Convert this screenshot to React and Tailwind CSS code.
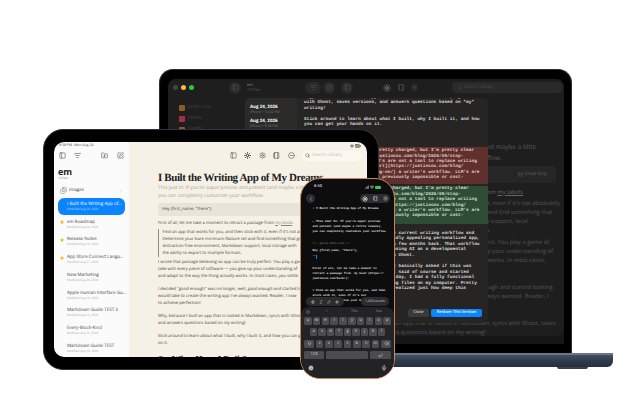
import { PanelLeft, ListFilter, FolderPlus, SquarePen, Settings, CircleMinus, Search, ChevronRight, ChevronLeft, Images, Star, Wifi, BatteryFull, Signal, Mail, Mic, Smile, Bold, Italic, Link, Hash, Delete, ArrowBigUp, CornerDownLeft, Sun, Notebook } from 'lucide-react'

const files = [
  ['em Roadmap', 'Modified Aug 24, 2026', true],
  ['Release Notes', 'Modified Aug 14, 2026', true],
  ['App Store Connect Langu...', 'Modified Aug 21, 2026', true],
  ['New Marketing', 'Modified Aug 20, 2026', false],
  ['Apple Human Interface Gu...', 'Modified Aug 19, 2026', false],
  ['Markdown Guide TEST 3', 'Modified Aug 18, 2026', false],
  ['Every-Block-Kind', 'Modified Aug 18, 2026', false],
  ['Markdown Guide TEST', 'Modified Aug 18, 2026', false],
]

// [text, line length in characters] - the start of each line sits behind the other devices
const oldLines = [
  ["pretty charged, but I'm pretty clear", 63],
  ['justincox.com/blog/2026/05/stop-', 59],
  ["LLM's are not a tool to replace writing", 64],
  ['start](https://justincox.com/blog/', 59],
  ["using-on/) a writer's workflow. LLM's are", 65],
  ['things previously impossible or cost-', 59],
]
const newLines = [
  ["pretty charged, but I'm pretty clear", 61],
  ['justincox.com/blog/2026/05/stop-', 58],
  ["LLM's are not a tool to replace writing", 64],
  ['start](https://justincox.com/blog/', 60],
  ["using-on/) a writer's workflow. LLM's are", 65],
  ['things previously impossible or cost-', 59],
]
const restLines = [
  [
    ['my current writing workflow and', 63],
    ['wildly appealing personalized app,', 65],
    ['a few months back. That workflow', 65],
    ['using AI as a developmental', 60],
    ['with Ghost.', 41],
  ],
  [
    ['I basically asked if this was', 62],
    ['It said of course and started', 61],
    ['One day, I had a fully functional', 63],
    ['reading files on my computer. Pretty', 64],
    ['soon I realized just how deep this', 60],
  ],
]

function Mono({ lines, className = '' }) {
  return (
    <div className={className}>
      {lines.map(([text, chars], i) => (
        <div key={i} className="whitespace-pre h-[5.4px]">{text.padStart(chars)}</div>
      ))}
    </div>
  )
}

function Laptop() {
  return (
    <div className="absolute left-[118px] top-[69px] w-[495px] flex flex-col items-center">
      <div className="w-[413px] h-[284px] bg-black rounded-t-[14px] pt-[9px] pl-[8px] pr-[7px] border-t border-x border-[#2a2d33]">
        <div className="h-[265px] bg-[#161616] rounded-t-[8px]">
          <div className="relative h-[257px] bg-[#1e1e1e] rounded-[8px] overflow-hidden font-['Open_Sans',sans-serif]">
            <div className="flex items-center h-[17px] pl-[5px] pr-[2px] text-[#555]">
              <span className="w-[5px] h-[5px] rounded-full bg-[#444]" />
              <span className="ml-[3px] w-[5px] h-[5px] rounded-full bg-[#febc2e]" />
              <span className="ml-[3px] w-[5px] h-[5px] rounded-full bg-[#28c840]" />
              <span className="ml-[35px] w-[12px] h-[12px] rounded-full bg-[#2a2a2a] flex items-center justify-center"><PanelLeft size={7} /></span>
              <div className="ml-[6px] text-[4px] leading-[5px] text-[#888]">
                <div>em</div>
                <div className="text-[#555]">10 files</div>
              </div>
              <span className="ml-[45px] w-[16px] h-[12px] rounded-full bg-[#2a2a2a] flex items-center justify-center"><ListFilter size={7} /></span>
              <span className="ml-[2px] w-[12px] h-[12px] rounded-full bg-[#2a2a2a] flex items-center justify-center"><SquarePen size={7} /></span>
              <span className="ml-[6px] w-[12px] h-[12px] rounded-full bg-[#2a2a2a] flex items-center justify-center"><PanelLeft size={7} /></span>
              <Sun size={8} strokeWidth={3} className="ml-[30px] text-[#777]" />
              <Notebook size={7} className="ml-[7px]" />
              <Settings size={7} className="ml-[6px]" />
              <div className="ml-auto w-[110px] h-[11px] rounded-[4px] bg-[#2a2a2a] flex items-center pl-[5px] gap-[2px] text-[4.5px] text-[#4d4d4d]">
                <Search size={5} />
                Search Library
              </div>
            </div>
            <div className="flex">
              <div className="w-[73px] pl-[11px] pt-[8px] flex flex-col gap-[4px] text-[5px] text-[#444]">
                <div className="flex items-center gap-[3px] h-[7px]">
                  <span className="w-[6px] h-[6px] rounded-[1px] bg-[#8a5a2b]" />
                  Justin Cox
                </div>
                <div className="flex items-center gap-[3px] h-[7px]">
                  <span className="w-[6px] h-[6px] rounded-[1px] bg-[#a03050]" />
                  Notes
                </div>
                <div className="flex items-center gap-[3px] h-[7px]">
                  <span className="w-[6px] h-[6px] rounded-[1px] bg-[#8a5a2b]" />
                  Drafts
                </div>
              </div>
              <div className="w-[98px]" />
              <div className="flex-1 text-[5.85px] leading-[9px] text-[#565656] whitespace-nowrap">
                <div className="mt-[13px] text-[11px] leading-[13px] font-bold text-[#bdbdbd] font-['Liberation_Serif',serif]">
                  <div>I Built the Writing App of My</div>
                  <div>Dreams</div>
                </div>
                <div className="mt-[6px] text-[6.5px] leading-[11px] text-[#5a5a5a]">
                  <div>This Just In: If you're super precise and patient (and maybe a little</div>
                  <div>insane), you can completely customize your workflow.</div>
                </div>
                <div className="mt-[3px] mr-[8px] h-[17px] bg-[#262626] rounded-[3px] flex items-center justify-end pr-[9px] gap-[2px] text-[4.5px] text-[#666]">
                  <Mail size={5} />
                  Email Only
                </div>
                <div className="mt-[4.5px] text-right pr-[41px] text-[#666]">retract a passage from <span className="underline">my labels</span></div>
                <div className="mt-[2px] pl-[8px]">
                  <div>Find an app that works for you, and then stick with it, even if it's not absolutely</div>
                  <div>perfect. Determine your bare minimum feature set and find something that</div>
                  <div>gives you a distraction-free environment, Markdown support, local</div>
                  <div>storage with the ability to export to multiple formats.</div>
                </div>
                <div className="mt-[3px]">
                  <div>I wrote that passage believing no app can be truly perfect. You play a game of</div>
                  <div>compromise with every piece of software — you give up your understanding of</div>
                  <div>what you want and adapt to the way the thing actually works. In most cases,</div>
                  <div>you settle.</div>
                </div>
                <div className="mt-[9px]">
                  <div>I decided "good enough" was no longer, well, good enough and started looking</div>
                  <div>into what it would take to create the writing app I've always wanted. Reader, I</div>
                  <div>now know what it takes to achieve perfection!</div>
                </div>
                <div className="mt-[9px]">
                  <div>Why, because I built an app that is rooted in Markdown, syncs with Ghost, saves</div>
                  <div>versions, and answers questions based on my writing!</div>
                </div>
              </div>
            </div>
            <div className="absolute left-[77px] top-[19px] w-[243px] h-[225px] bg-[#272523] rounded-[5px] flex overflow-hidden">
              <div className="w-[52px] pl-[5px] pt-[6px] bg-[#2b2b2c] text-[4.5px] leading-[6px] text-white">
                <div className="font-bold whitespace-nowrap">Aug 24, 2026</div>
                <div className="text-[3.5px] text-[#777] whitespace-nowrap">iPhone • 10:02 PM</div>
                <div className="mt-[2px] font-bold whitespace-nowrap">Aug 24, 2026</div>
                <div className="text-[3.5px] text-[#777] whitespace-nowrap">iPhone • 9:58 PM</div>
              </div>
              <div className="w-[191px] flex flex-col font-['Liberation_Mono',monospace] text-[4.5px] leading-[5.4px] text-[#d8d8d8] font-bold">
                <div className="pl-[7px] -mt-[3px]">
                  <Mono lines={[['Why, because I built an app that is rooted in Markdown, syncs', 0], ['with Ghost, saves versions, and answers questions based on *my*', 0], ['writing!', 0], ['', 0], ['Stick around to learn about what I built, why I built it, and how', 0], ['you can get your hands on it.', 0]]} />
                  <div className="mt-[8.6px] h-[5.4px] whitespace-nowrap">## Markdown Makes It Easy</div>
                </div>
                <Mono lines={oldLines} className="mt-[5.6px] pl-[7px] pt-[1.3px] pb-[3.3px] bg-[#5f302c] text-[#e0ccca]" />
                <Mono lines={newLines} className="mt-[2.6px] pl-[7px] pb-[5px] bg-[#2e4c36] text-[#cfe0d3]" />
                <Mono lines={restLines[0]} className="mt-[7.3px] pl-[7px]" />
                <Mono lines={restLines[1]} className="mt-[6.3px] pl-[7px]" />
                <div className="mt-auto pb-[6px] pr-[6px] flex justify-end gap-[2px] font-['Open_Sans',sans-serif] font-semibold text-[4px] leading-[8px]">
                  <span className="w-[21px] h-[8px] rounded-[2px] bg-[#3a3a3a] text-center text-[#ccc]">Close</span>
                  <span className="w-[51px] h-[8px] rounded-[2px] bg-[#0a84ff] text-center text-white">Restore This Version</span>
                </div>
              </div>
            </div>
          </div>
        </div>
      </div>
      <div className="w-full h-[14px] rounded-b-[6px] border-t-2 border-[#66788c] bg-gradient-to-b from-[#44505f] via-[#2f3a4a] to-[#262f3c]" />
      <div className="self-end mr-[25px] w-[31px] h-[2px] bg-[#3a3f47] rounded-b-[2px]" />
    </div>
  )
}

function Ipad() {
  return (
    <div className="absolute left-[43px] top-[129px] w-[336px] h-[241px] bg-black rounded-[20px] border border-[#333] pt-[12px] pb-[12px] pl-[10px] pr-[11px] font-['Open_Sans',sans-serif]">
      <div className="h-[215px] rounded-[10px] overflow-hidden flex">
        <div className="w-[75px] bg-[#fbfbfb] flex flex-col shrink-0 text-[#333]">
          <div className="h-[8px] shrink-0 pl-[5px] pt-[1px] text-[3.5px] leading-[6px] text-[#444] whitespace-nowrap">8:58 PM&nbsp;&nbsp;Mon Aug 24</div>
          <div className="flex items-center h-[11px] shrink-0 pl-[5px] text-[#555]">
            <PanelLeft size={7} />
            <ListFilter size={7} className="ml-[8px]" />
            <FolderPlus size={7} className="ml-[20px]" />
            <SquarePen size={7} className="ml-[9px]" />
          </div>
          <div className="mt-[6px] shrink-0 pl-[4px] text-[9px] leading-[9px] font-bold text-[#222]">em</div>
          <div className="pl-[4px] shrink-0 text-[3px] leading-[4px] text-[#888]">10 files</div>
          <div className="mt-[6px] h-[9px] shrink-0 flex items-center pl-[6px] pr-[6px] text-[4.5px] text-[#444]">
            <Images size={7} className="text-[#7f9c8d]" />
            <span className="ml-[2px] flex-1">images</span>
            <ChevronRight size={4} className="text-[#aaa]" />
          </div>
          <div className="mt-[3px] mx-[4px] h-[17px] shrink-0 rounded-[6px] bg-[#0a84ff] pl-[9px] pt-[3px] text-white">
            <div className="text-[4.5px] leading-[6px] whitespace-nowrap">I Built the Writing App of...</div>
            <div className="text-[3px] leading-[4px] text-[#bcdcff] whitespace-nowrap">Modified Aug 24, 2026</div>
          </div>
          <div className="mt-[3px] shrink-0 flex flex-col">
            {files.map(([title, date, starred]) => (
              <div key={title} className="relative h-[17.8px] shrink-0 pl-[13px] pt-[0.5px]">
                {starred && <Star size={4} fill="#f5b81f" stroke="#f5b81f" className="absolute left-[6px] top-[2px]" />}
                <div className="text-[4.5px] leading-[6px] text-[#444] whitespace-nowrap">{title}</div>
                <div className="text-[3px] leading-[4px] text-[#aaa] whitespace-nowrap">{date}</div>
              </div>
            ))}
          </div>
        </div>
        <div className="flex-1 bg-[#f5f1e6] flex flex-col text-[4.25px] leading-[7px] text-[#4a4640]">
          <div className="h-[8px] shrink-0 flex items-center justify-end gap-[1px] pr-[6px] text-[#222]">
            <Wifi size={4} strokeWidth={3} />
            <BatteryFull size={6} />
          </div>
          <div className="h-[11px] shrink-0 flex items-center justify-end gap-[7.5px] pr-[5px] text-[#555]">
            <PanelLeft size={7} />
            <Sun size={7} strokeWidth={3} className="text-[#333]" />
            <Settings size={7} />
            <Notebook size={7} />
            <CircleMinus size={7} />
            <div className="w-[60px] h-[10px] rounded-[5px] bg-[#fbf8ef] flex items-center pl-[3px] gap-[2px] text-[4.5px] text-[#bbb]">
              <Search size={5} className="text-[#444]" />
              Search Library
            </div>
          </div>
          <div className="pl-[29px] shrink-0 whitespace-nowrap">
            <div className="mt-[11px] text-[11px] leading-[12px] tracking-[-0.4px] font-bold text-[#222] font-['Liberation_Serif',serif]">I Built the Writing App of My Dreams</div>
            <div className="text-[5px] leading-[8px] text-[#aaa69a]">
              <div>This Just In: If you're super precise and patient (and maybe a little insane),</div>
              <div>you can completely customize your workflow.</div>
            </div>
            <div className="mt-[3px] w-[195px] h-[13px] pl-[4px] rounded-[2px] bg-[#e8e4d9] flex items-center">Hey {'{first_name, "there"}'},</div>
            <div className="mt-[3.5px]">First of all, let me take a moment to retract a passage from <span className="underline text-[#8a8a70]">my book</span>:</div>
            <div className="mt-[2px] border-l border-[#8a9080] pl-[3.5px]">
              <div>Find an app that works for you, and then stick with it, even if it's not absolutely</div>
              <div>Determine your bare minimum feature set and find something that gives you</div>
              <div>distraction-free environment, Markdown support, local storage with</div>
              <div>the ability to export to multiple formats.</div>
            </div>
            <div className="mt-[2px]">
              <div>I wrote that passage believing <em>no</em> app can be truly perfect. You play a game of</div>
              <div>take with every piece of software — you give up your understanding of</div>
              <div>and adapt to the way the thing <em>actually</em> works. In most cases, you settle.</div>
            </div>
            <div className="mt-[6.7px]">
              <div>I decided "good enough" was no longer, well, <em>good enough</em> and started looking</div>
              <div>would take to create the writing app I've always wanted. Reader, I now</div>
              <div>to achieve perfection!</div>
            </div>
            <div className="mt-[6px]">
              <div>Why, because I <em>built</em> an app that is rooted in Markdown, syncs with Ghost, saves</div>
              <div>and answers questions based on <em>my</em> writing!</div>
            </div>
            <div className="mt-[6.3px]">
              <div>Stick around to learn about what I built, why I built it, and how you can get</div>
              <div>on it.</div>
            </div>
            <div className="mt-[6.5px] text-[9px] leading-[10px] font-bold text-[#222] font-['Liberation_Serif',serif]">So, What Have I Built?</div>
          </div>
        </div>
      </div>
    </div>
  )
}

const keyRows = ['qwertyuiop', 'asdfghjkl', 'zxcvbnm']

function Key({ children, className = 'w-[7.5px]' }) {
  return <div className={`h-[8px] rounded-[1.5px] bg-[#4c4c4e] flex items-center justify-center text-[4px] text-[#ddd] ${className}`}>{children}</div>
}

function Phone() {
  return (
    <div className="absolute left-[300px] top-[178px] w-[95px] h-[201px] bg-[#0d0d0d] rounded-[20px] border-[1.5px] border-[#c9855b] overflow-hidden flex flex-col font-['Open_Sans',sans-serif]">
      <div className="h-[13px] shrink-0 flex items-center justify-between pt-[3px] px-[13px] text-[4px] font-semibold text-[#ddd]">
        <span>6:50</span>
        <span className="flex items-center gap-[1px]">
          <Signal size={4} strokeWidth={3} />
          <Wifi size={4} strokeWidth={3} />
          <span className="w-[6px] h-[3px] rounded-[1px] bg-[#34c759]" />
        </span>
      </div>
      <div className="h-[13px] shrink-0 flex items-center justify-between pl-[5px] pr-[4px] text-[#ccc]">
        <span className="w-[9px] h-[9px] rounded-full bg-[#2e2e30] flex items-center justify-center"><ChevronLeft size={6} /></span>
        <span className="h-[9px] rounded-full bg-[#2e2e30] flex items-center gap-[5px] px-[2px]">
          <Sun size={6} strokeWidth={3} className="text-white" />
          <Notebook size={5} />
          <Settings size={5} />
        </span>
      </div>
      <div className="relative flex-1 min-h-0 overflow-hidden pl-[11.5px] pt-[1.5px] font-['Liberation_Mono',monospace] font-bold text-[2.9px] leading-[4.9px] text-[#e2e2e2] whitespace-nowrap">
        <div>• I Built the Writing App of My Dreams</div>
        <div className="mt-[8.5px]">— This Just In: If you're super precise</div>
        <div>and patient (and maybe a little insane),</div>
        <div>you can completely customize your workflow.</div>
        <div className="mt-[7px] text-[#666]">&lt;!--ghost-html-end--&gt;</div>
        <div className="mt-[2px]">Hey {'{first_name, "there"}'},</div>
        <div className="flex items-center mt-[1px]">--<span className="w-[0.8px] h-[4px] bg-[#0a84ff]" /></div>
        <div className="mt-[8px]">First of all, let me take a moment to</div>
        <div>retract a passage from `my book`(https://</div>
        <div>justincox.com/book/):</div>
        <div className="mt-[7px]">&gt; Find an app that works for you, and then</div>
        <div>stick with it, even if it's not</div>
        <div>absolutely. Determine your bare</div>
        <div className="absolute left-[5px] right-[5px] top-[92px] flex items-center justify-between font-['Open_Sans',sans-serif] font-normal text-[#ccc]">
          <span className="w-[38px] h-[9px] rounded-full bg-[#2c2c2e] flex items-center justify-around px-[3px]">
            <Bold size={4} strokeWidth={3} />
            <Italic size={4} />
            <Link size={4} />
            <Hash size={4} />
          </span>
          <span className="w-[28px] h-[9px] rounded-full bg-[#2c2c2e] text-center text-[3.5px] leading-[9px]">1,053 words</span>
        </div>
      </div>
      <div className="h-[71px] shrink-0 bg-[#232325] rounded-t-[8px] flex flex-col text-[#ccc]">
        <div className="h-[10px] flex items-center pl-[5px] text-[3.5px] text-[#999]">
          <Smile size={4} />
          <span className="ml-[16px]">I</span>
          <span className="ml-[24px]">This</span>
          <span className="ml-[18px]">You</span>
        </div>
        <div className="flex flex-col gap-[3.4px] px-[3px]">
          <div className="flex justify-between">{keyRows[0].split('').map(k => <Key key={k}>{k}</Key>)}</div>
          <div className="flex justify-center gap-[1px]">{keyRows[1].split('').map(k => <Key key={k}>{k}</Key>)}</div>
          <div className="flex justify-between">
            <Key className="w-[10px]"><ArrowBigUp size={5} /></Key>
            {keyRows[2].split('').map(k => <Key key={k}>{k}</Key>)}
            <Key className="w-[10px]"><Delete size={5} /></Key>
          </div>
          <div className="flex justify-between">
            <Key className="w-[20px]">123</Key>
            <Key className="w-[42px]" />
            <Key className="w-[21px]"><CornerDownLeft size={5} /></Key>
          </div>
        </div>
        <div className="flex-1 flex items-center justify-between px-[7px] pb-[1px]">
          <Smile size={6} className="text-[#ddd]" fill="#ddd" stroke="#333" />
          <Mic size={6} className="text-[#ddd]" />
        </div>
      </div>
    </div>
  )
}

export default function App() {
  return (
    <div className="relative w-[640px] h-[400px] bg-white overflow-hidden [text-rendering:geometricPrecision]">
      <Laptop />
      <Ipad />
      <Phone />
    </div>
  )
}
